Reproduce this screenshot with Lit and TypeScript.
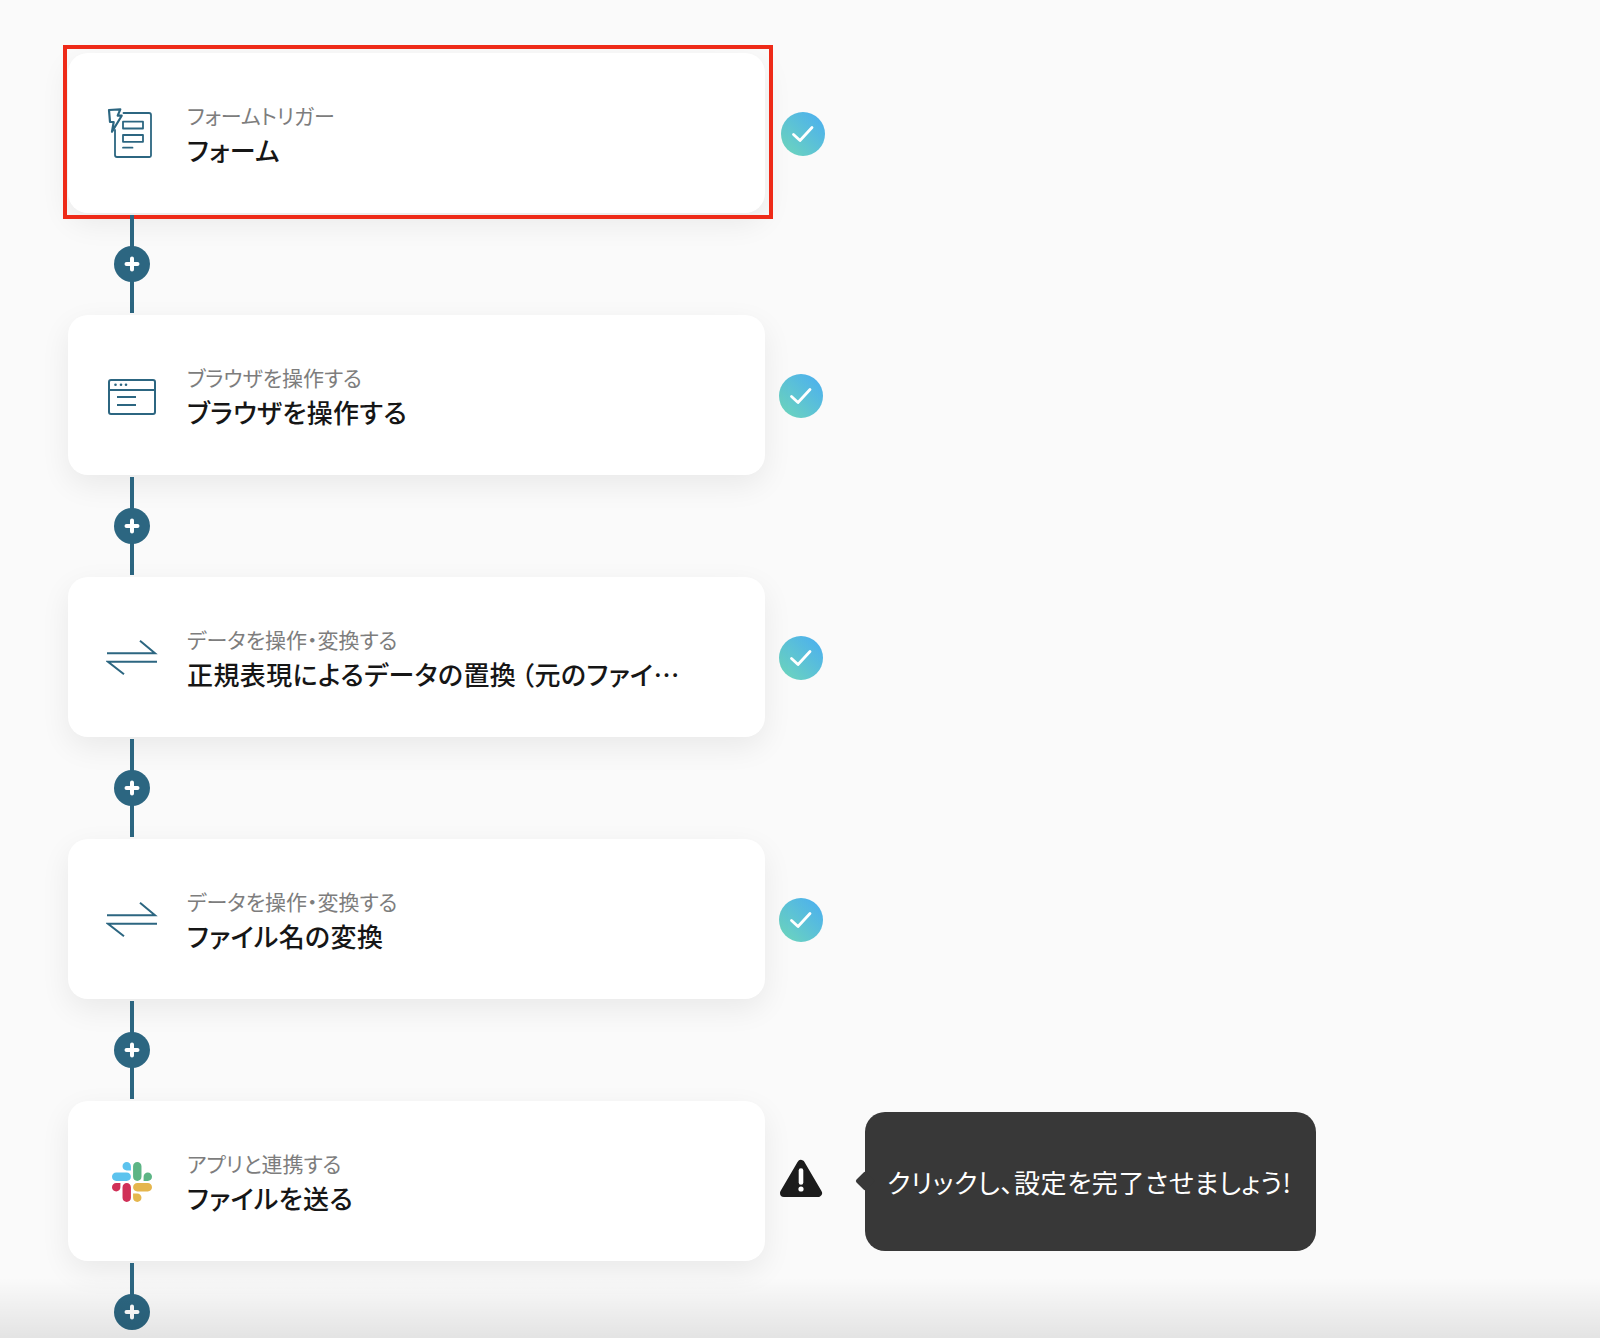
import { LitElement, html, css } from "lit";
import { customElement } from "lit/decorators.js";

const formIcon = html`<svg class="icon" width="52" height="50" viewBox="0 0 52 50" fill="none" stroke="#2c6681" stroke-width="1.800" stroke-linejoin="round" stroke-linecap="round">
  <path d="M17.500 5H43a2 2 0 0 1 2 2V47.500a1.500 1.500 0 0 1-1.500 1.500H11a2 2 0 0 1-2-2V22"/>
  <path d="M3 2L14.300 1.300L11.700 7.700H15.700L6 23.700L7.700 14H4Z" stroke-width="2.200"/>
  <rect x="17" y="13.700" width="20" height="6.800"/>
  <rect x="17" y="27" width="20" height="6.800"/>
  <path d="M17 39.700H26.500"/>
</svg>`;

const browserIcon = html`<svg class="icon" width="48" height="48" viewBox="0 0 48 48" fill="none" stroke="#2c6681" stroke-width="2">
  <rect x="1" y="9" width="46" height="34" rx="2"/>
  <path d="M1 19H47"/>
  <path d="M9 26H28M9 34H28" stroke-width="1.800"/>
  <g fill="#2c6681" stroke="none"><circle cx="7.500" cy="13.700" r="1.300"/><circle cx="13" cy="13.700" r="1.300"/><circle cx="18" cy="13.700" r="1.300"/></g>
</svg>`;

const swapIcon = html`<svg class="icon" width="52" height="48" viewBox="0 0 52 48" fill="none" stroke="#2c6681" stroke-width="2">
  <path d="M1 20.300H49L34 7.700"/>
  <path d="M51 28.700H2L18 41.300"/>
</svg>`;

const slackIcon = html`<svg class="icon slack" width="40" height="40" viewBox="0 0 122.800 122.800">
  <path d="M25.800 77.600c0 7.100-5.800 12.900-12.900 12.900S0 84.700 0 77.600s5.800-12.900 12.900-12.900h12.900v12.900zm6.500 0c0-7.100 5.800-12.900 12.900-12.900s12.900 5.800 12.900 12.900v32.300c0 7.100-5.800 12.900-12.900 12.900s-12.900-5.800-12.900-12.900V77.600z" fill="#d03057"/>
  <path d="M45.200 25.800c-7.100 0-12.900-5.800-12.900-12.900S38.100 0 45.200 0s12.900 5.800 12.900 12.900v12.900H45.200zm0 6.500c7.100 0 12.900 5.800 12.900 12.900s-5.800 12.900-12.900 12.900H12.900C5.800 58.100 0 52.300 0 45.200s5.800-12.900 12.900-12.900h32.300z" fill="#5cc3ee"/>
  <path d="M97 45.200c0-7.100 5.800-12.900 12.900-12.900s12.900 5.800 12.900 12.900-5.800 12.900-12.900 12.900H97V45.200zm-6.500 0c0 7.100-5.800 12.900-12.900 12.900s-12.900-5.800-12.900-12.900V12.900C64.700 5.800 70.500 0 77.600 0s12.900 5.800 12.900 12.900v32.300z" fill="#5cb585"/>
  <path d="M77.600 97c7.100 0 12.900 5.800 12.900 12.900s-5.800 12.900-12.900 12.900-12.900-5.800-12.900-12.900V97h12.900zm0-6.500c-7.100 0-12.900-5.800-12.900-12.900s5.800-12.900 12.900-12.900h32.300c7.100 0 12.900 5.800 12.900 12.900s-5.800 12.900-12.900 12.900H77.600z" fill="#e5b64d"/>
</svg>`;

const check = html`<span class="check"><svg width="24" height="20" viewBox="0 0 24 20" fill="none" stroke="#fff" stroke-width="2.800" stroke-linecap="round" stroke-linejoin="round"><path d="M2.500 10.500L9 16.500L21 3.500"/></svg></span>`;

const warning = html`<svg class="warn" width="44" height="40" viewBox="0 0 44 40">
  <path d="M22 6L39 35H5Z" fill="#1c1c1c" stroke="#1c1c1c" stroke-width="8" stroke-linejoin="round"/>
  <path d="M22 12.500V24.500" stroke="#fff" stroke-width="4.600" stroke-linecap="round"/>
  <circle cx="22" cy="31" r="2.600" fill="#fff"/>
</svg>`;

interface Step { icon: unknown; label: string; title: unknown; warn?: boolean; }

const steps: Step[] = [
  { icon: formIcon, label: "フォームトリガー", title: "フォーム" },
  { icon: browserIcon, label: "ブラウザを操作する", title: "ブラウザを操作する" },
  { icon: swapIcon, label: "データを操作・変換する", title: html`正規表現によるデータの置換<span class="paren">\uFF08</span>元のファイル名から拡張子を取り除く)` },
  { icon: swapIcon, label: "データを操作・変換する", title: "ファイル名の変換" },
  { icon: slackIcon, label: "アプリと連携する", title: "ファイルを送る", warn: true },
];

@customElement("app-root")
export class AppRoot extends LitElement {
  static styles = css`
    :host {
      display: block;
      position: relative;
      width: 1600px;
      height: 1338px;
      overflow: hidden;
      background: #fafafa;
      font-family: "Noto Sans CJK JP", "Noto Sans", sans-serif;
      font-feature-settings: "palt";
    }
    .flow {
      display: flex;
      flex-direction: column;
      padding: 53px 0 0 68px;
    }
    .row {
      display: flex;
      align-items: center;
      height: 160px;
    }
    .card {
      position: relative;
      box-sizing: border-box;
      width: 697px;
      height: 160px;
      flex: none;
      display: flex;
      align-items: center;
      background: #fff;
      border-radius: 20px;
      box-shadow: 0 10px 30px rgba(0, 0, 0, 0.07);
    }
    .selected::after {
      content: "";
      position: absolute;
      left: -5px;
      top: -8px;
      width: 710px;
      height: 174px;
      box-sizing: border-box;
      border: 4px solid #ee2a18;
    }
    .iconbox {
      width: 52px;
      margin-left: 38px;
      margin-right: 29px;
      display: flex;
      justify-content: center;
      flex: none;
    }
    .icon { display: block; }
    .slack { margin-top: 2px; }
    .text {
      display: flex;
      flex-direction: column;
      min-width: 0;
      width: 499px;
      margin-top: 2px;
    }
    .label {
      font-size: 21px;
      line-height: 31px;
      margin-bottom: 1px;
      color: #7d7d7d;
      white-space: nowrap;
    }
    .title {
      font-size: 26px;
      line-height: 36px;
      letter-spacing: 0.4px;
      font-weight: 500;
      color: #161616;
      white-space: nowrap;
      overflow: hidden;
      text-overflow: ellipsis;
    }
    .paren { margin-left: 5px; }
    .status {
      margin-left: 14px;
      margin-top: 2px;
      display: flex;
      align-items: center;
    }
    .first { margin-left: 16px; }
    .alert { margin-top: -7px; }
    .check {
      width: 44px;
      height: 44px;
      border-radius: 50%;
      display: flex;
      align-items: center;
      justify-content: center;
      background: linear-gradient(225deg, #4fb3ea 15%, #6bd3bf 90%);
    }
    .warn { display: block; }
    .tip {
      position: relative;
      box-sizing: border-box;
      margin-left: 42px;
      width: 451px;
      height: 139px;
      display: flex;
      align-items: center;
      padding-left: 22px;
      background: #383838;
      color: #fff;
      border-radius: 20px;
      font-size: 26px;
      letter-spacing: 0.6px;
      white-space: nowrap;
    }
    .tip::before {
      content: "";
      position: absolute;
      left: -7px;
      top: 50%;
      width: 14px;
      height: 14px;
      margin-top: -7px;
      border-radius: 2px;
      background: #383838;
      transform: rotate(45deg);
    }
    .link {
      position: relative;
      width: 36px;
      height: 102px;
      margin-left: 46px;
      display: flex;
      align-items: center;
      justify-content: center;
    }
    .link::before {
      content: "";
      position: absolute;
      left: 16px;
      top: 2px;
      bottom: 2px;
      width: 4px;
      background: #2c6681;
    }
    .link.last::before { bottom: 50px; }
    .plus {
      position: relative;
      width: 36px;
      height: 36px;
      border-radius: 50%;
      background: #2c6681;
      display: flex;
      align-items: center;
      justify-content: center;
    }
    .fade {
      position: absolute;
      left: 0;
      right: 0;
      bottom: 0;
      height: 60px;
      pointer-events: none;
      background: linear-gradient(to bottom, rgba(0, 0, 0, 0), rgba(0, 0, 0, 0.09));
    }
  `;

  render() {
    return html`
      <div class="flow">
        ${steps.map((s, i) => html`
          <div class="row">
            <div class="card ${i === 0 ? "selected" : ""}">
              <div class="iconbox">${s.icon}</div>
              <div class="text">
                <div class="label">${s.label}</div>
                <div class="title">${s.title}</div>
              </div>
            </div>
            <div class="status ${i === 0 ? "first" : ""} ${s.warn ? "alert" : ""}">${s.warn ? warning : check}</div>
            ${s.warn ? html`<div class="tip">クリックし、設定を完了させましょう!</div>` : ""}
          </div>
          <div class="link ${i === steps.length - 1 ? "last" : ""}"><span class="plus"><svg width="16" height="16" viewBox="0 0 16 16" fill="none" stroke="#fff" stroke-width="4" stroke-linecap="round"><path d="M8 2.500V13.500M2.500 8H13.500"/></svg></span></div>
        `)}
      </div>
      <div class="fade"></div>
    `;
  }
}
